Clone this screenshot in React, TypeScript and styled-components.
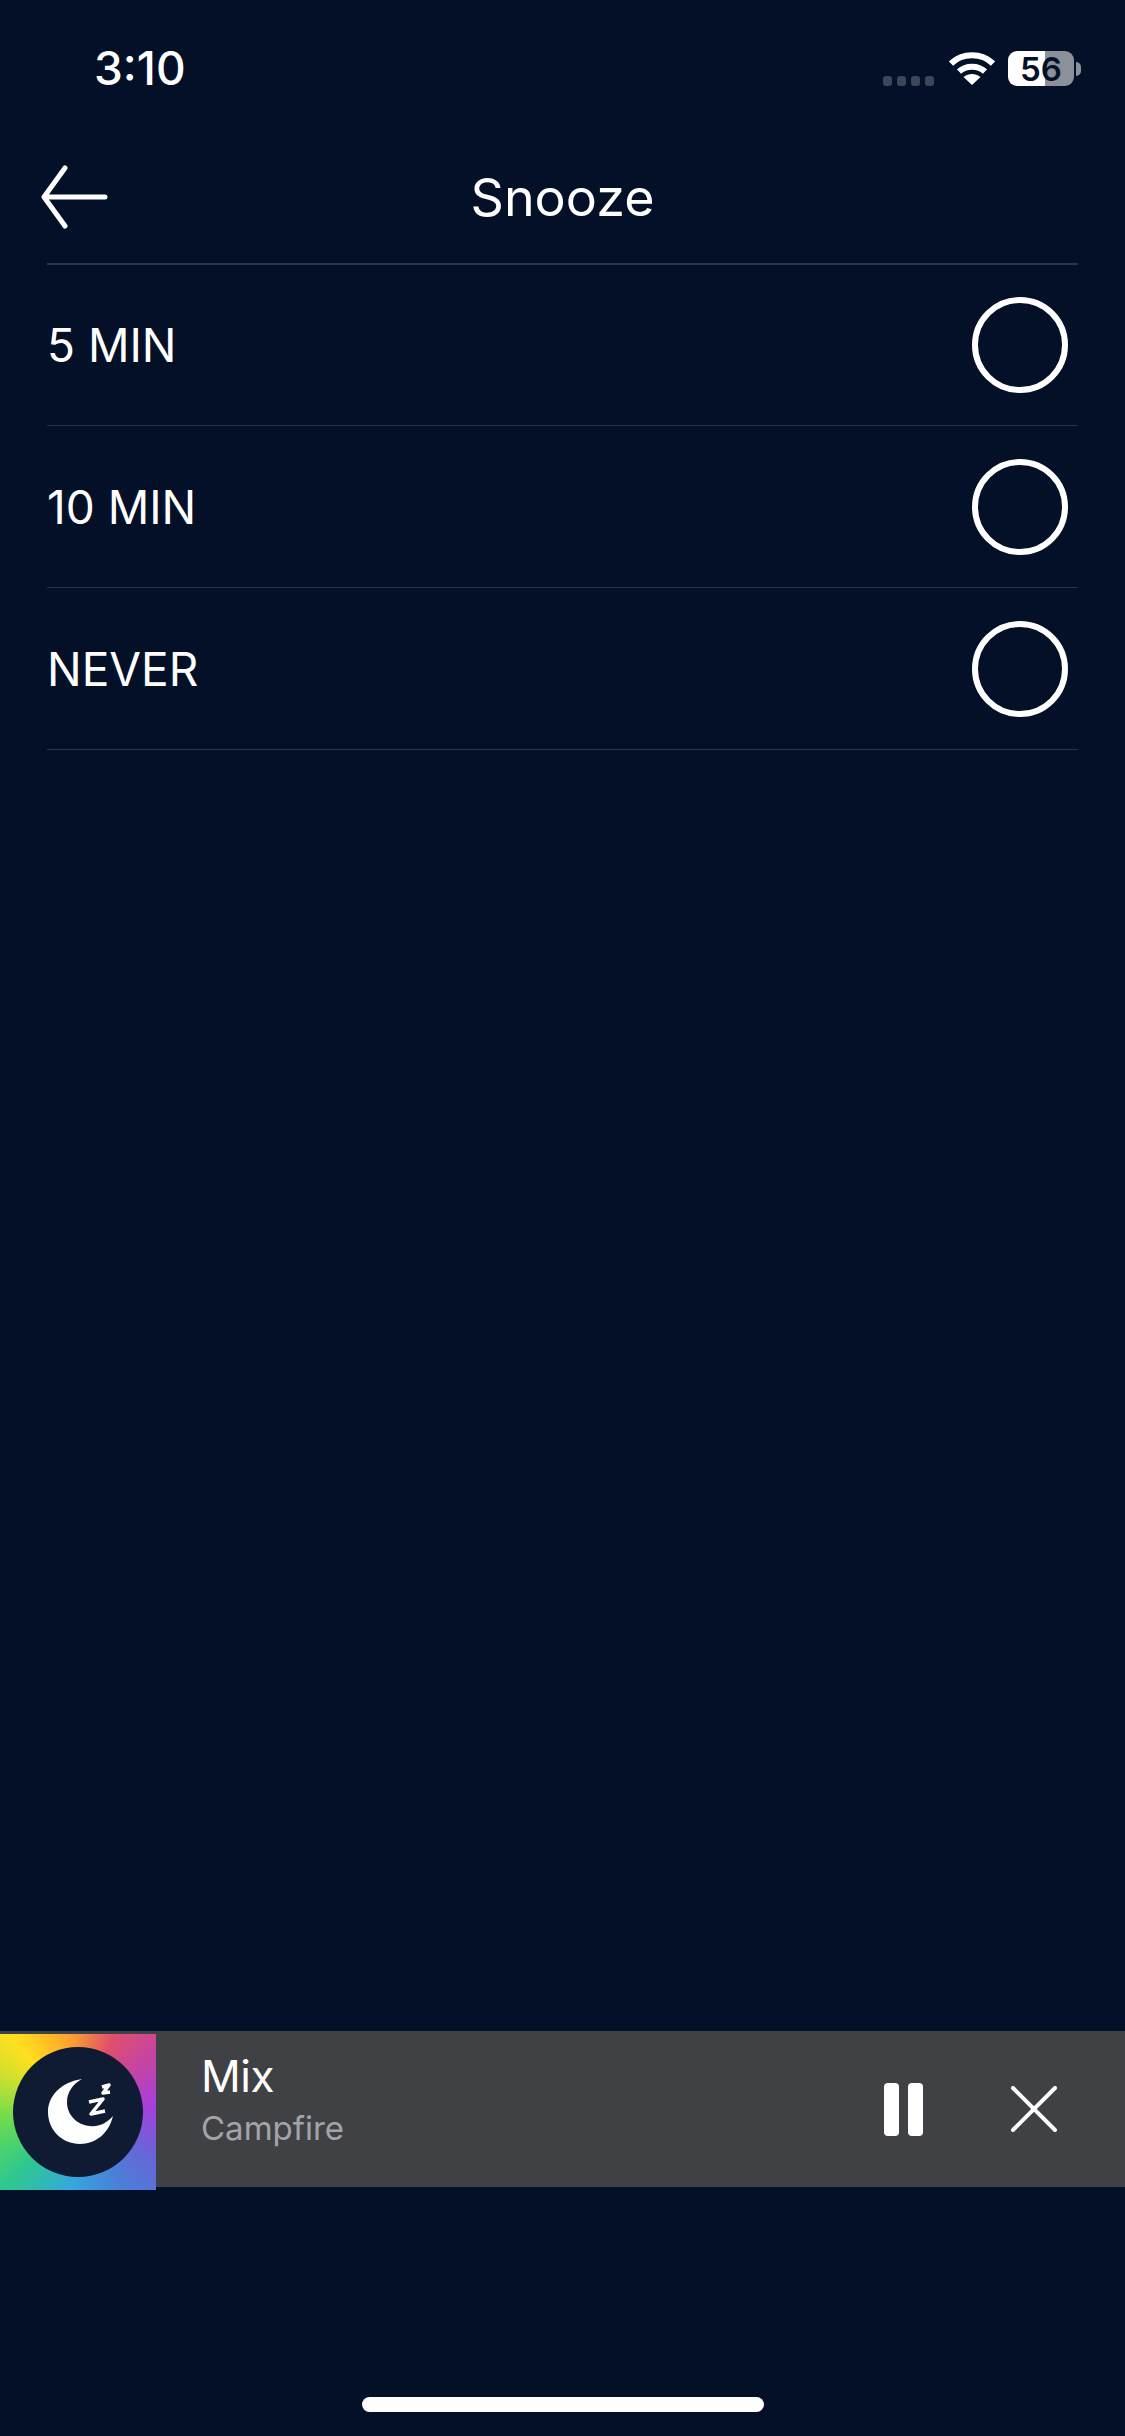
import styled, { createGlobalStyle } from "styled-components";

const GlobalStyle = createGlobalStyle`
  html, body {
    margin: 0;
    padding: 0;
    background: #031027;
  }
  * {
    box-sizing: border-box;
  }
`;

const Screen = styled.div`
  width: 1125px;
  height: 2436px;
  display: flex;
  flex-direction: column;
  background: #031027;
  color: #fff;
  font-family: Inter, "Liberation Sans", sans-serif;
  overflow: hidden;
`;

const StatusBar = styled.div`
  height: 132px;
  flex: none;
  display: flex;
  justify-content: space-between;
  padding: 44px 44px 0 94px;
`;

const Time = styled.div`
  font-size: 46px;
  line-height: 48px;
  font-weight: 500;
`;

const StatusIcons = styled.div`
  display: flex;
  align-items: flex-start;
  padding-top: 7px;
`;

const SignalDots = styled.div`
  display: flex;
  gap: 5px;
  margin: 25px 15px 0 0;
`;

const SignalDot = styled.span`
  width: 9px;
  height: 10px;
  border-radius: 3px;
  background: #3d4658;
`;

const Battery = styled.div`
  width: 66px;
  height: 35px;
  margin-left: 13px;
  border-radius: 9px;
  background: linear-gradient(90deg, #fff 0 56%, #8b909b 56% 100%);
  color: #031027;
  font-size: 33px;
  line-height: 36px;
  font-weight: 600;
  text-align: center;
`;

const BatteryNub = styled.span`
  width: 5px;
  height: 14px;
  margin: 11px 0 0 2px;
  border-radius: 0 5px 5px 0;
  background: #8b909b;
`;

const Header = styled.header`
  height: 133px;
  flex: none;
  margin: 0 47px;
  display: flex;
  align-items: center;
  justify-content: center;
  position: relative;
  border-bottom: 2px solid #2e3644;
`;

const BackButton = styled.div`
  position: absolute;
  left: -6px;
  top: 33px;
  display: flex;
`;

const Title = styled.h1`
  margin: 0;
  font-size: 52px;
  line-height: 60px;
  font-weight: 400;
`;

const OptionList = styled.div`
  margin: 0 47px;
  flex: none;
`;

const OptionRow = styled.div`
  height: 162px;
  display: flex;
  align-items: center;
  justify-content: space-between;
  padding: 0 10px 0 0;
  border-bottom: 1px solid #2b3444;

  &:first-child {
    height: 161px;
  }
`;

const OptionLabel = styled.span`
  font-size: 46px;
  line-height: 56px;
  font-weight: 400;
`;

const Radio = styled.span`
  width: 96px;
  height: 96px;
  border: 6px solid #fff;
  border-radius: 50%;
`;

const Spacer = styled.div`
  flex: 1;
`;

const MiniPlayer = styled.section`
  height: 156px;
  flex: none;
  display: flex;
  background: #404145;
`;

const Artwork = styled.div`
  width: 156px;
  height: 156px;
  flex: none;
  margin-top: 3px;
  display: flex;
  align-items: center;
  justify-content: center;
  background: conic-gradient(
    from 0deg at 50% 50%,
    #f5953a 0deg,
    #e0506a 25deg,
    #c8459e 50deg,
    #a63fdc 85deg,
    #6a64d8 120deg,
    #4a80d8 150deg,
    #34a8dc 185deg,
    #2ec88f 225deg,
    #6edc4c 265deg,
    #d2e02c 298deg,
    #ffe01f 318deg,
    #ffb028 345deg,
    #f5953a 360deg
  );
`;

const MoonBadge = styled.div`
  width: 130px;
  height: 130px;
  border-radius: 50%;
  background: #0e1b33;
  display: flex;
  align-items: center;
  justify-content: center;
`;

const MoonIcon = styled.svg`
  width: 66px;
  height: 66px;
  margin-left: 5px;
`;

const TrackInfo = styled.div`
  flex: 1;
  padding: 18px 0 0 45px;
`;

const TrackTitle = styled.div`
  font-size: 44px;
  line-height: 54px;
  font-weight: 400;
  letter-spacing: -0.4px;
`;

const TrackSubtitle = styled.div`
  margin-top: 5px;
  font-size: 33px;
  line-height: 40px;
  font-weight: 400;
  color: #a3a4a8;
`;

const Controls = styled.div`
  display: flex;
  align-items: center;
  padding-right: 68px;
  gap: 88px;
`;

const PauseIcon = styled.div`
  display: flex;
  gap: 9px;
`;

const PauseBar = styled.span`
  width: 15px;
  height: 53px;
  border-radius: 4px;
  background: #fff;
`;

const Footer = styled.footer`
  flex: none;
  height: 249px;
  display: flex;
  justify-content: center;
  padding-top: 210px;
`;

const HomeBar = styled.div`
  width: 402px;
  height: 15px;
  border-radius: 8px;
  background: #fff;
`;

const options = ["5 MIN", "10 MIN", "NEVER"];

const App = () => {
  return (
    <Screen>
      <GlobalStyle />
      <StatusBar>
        <Time>3:10</Time>
        <StatusIcons>
          <SignalDots>
            <SignalDot />
            <SignalDot />
            <SignalDot />
            <SignalDot />
          </SignalDots>
          <svg width="46" height="35" viewBox="0 0 46 35" fill="none">
            <path d="M2 12.5C13.5 1.5 32.5 1.5 44 12.5" stroke="#fff" strokeWidth="6" />
            <path d="M10 20.5C17 14 29 14 36 20.5" stroke="#fff" strokeWidth="6" />
            <path d="M23 34L14.5 26C19.5 22 26.5 22 31.5 26Z" fill="#fff" />
          </svg>
          <Battery>56</Battery>
          <BatteryNub />
        </StatusIcons>
      </StatusBar>
      <Header>
        <BackButton>
          <svg width="68" height="64" viewBox="0 0 68 64" fill="none">
            <path d="M24 3L3 32L24 61M3 32H64" stroke="#fff" strokeWidth="5" strokeLinecap="round" strokeLinejoin="round" />
          </svg>
        </BackButton>
        <Title>Snooze</Title>
      </Header>
      <OptionList>
        {options.map((option) => (
          <OptionRow key={option}>
            <OptionLabel>{option}</OptionLabel>
            <Radio />
          </OptionRow>
        ))}
      </OptionList>
      <Spacer />
      <MiniPlayer>
        <Artwork>
          <MoonBadge>
            <MoonIcon viewBox="0 0 66 66">
              <path d="M34 0C14 3 0 16 0 33C0 51 14 65 32 65C48 65 61 54 65 37C58 45 50 48 42 47C29 46 19 36 19 23C19 13 25 5 34 0Z" fill="#fff" />
              <path d="M41 23L55 20L43 35L57 32M54 8L61 6L55 14L62 13" fill="none" stroke="#fff" strokeWidth="3.5" strokeLinejoin="round" />
            </MoonIcon>
          </MoonBadge>
        </Artwork>
        <TrackInfo>
          <TrackTitle>Mix</TrackTitle>
          <TrackSubtitle>Campfire</TrackSubtitle>
        </TrackInfo>
        <Controls>
          <PauseIcon>
            <PauseBar />
            <PauseBar />
          </PauseIcon>
          <svg width="46" height="46" viewBox="0 0 46 46" fill="none">
            <path d="M2 2L44 44M44 2L2 44" stroke="#fff" strokeWidth="4" strokeLinecap="round" />
          </svg>
        </Controls>
      </MiniPlayer>
      <Footer>
        <HomeBar />
      </Footer>
    </Screen>
  );
};

export default App;
